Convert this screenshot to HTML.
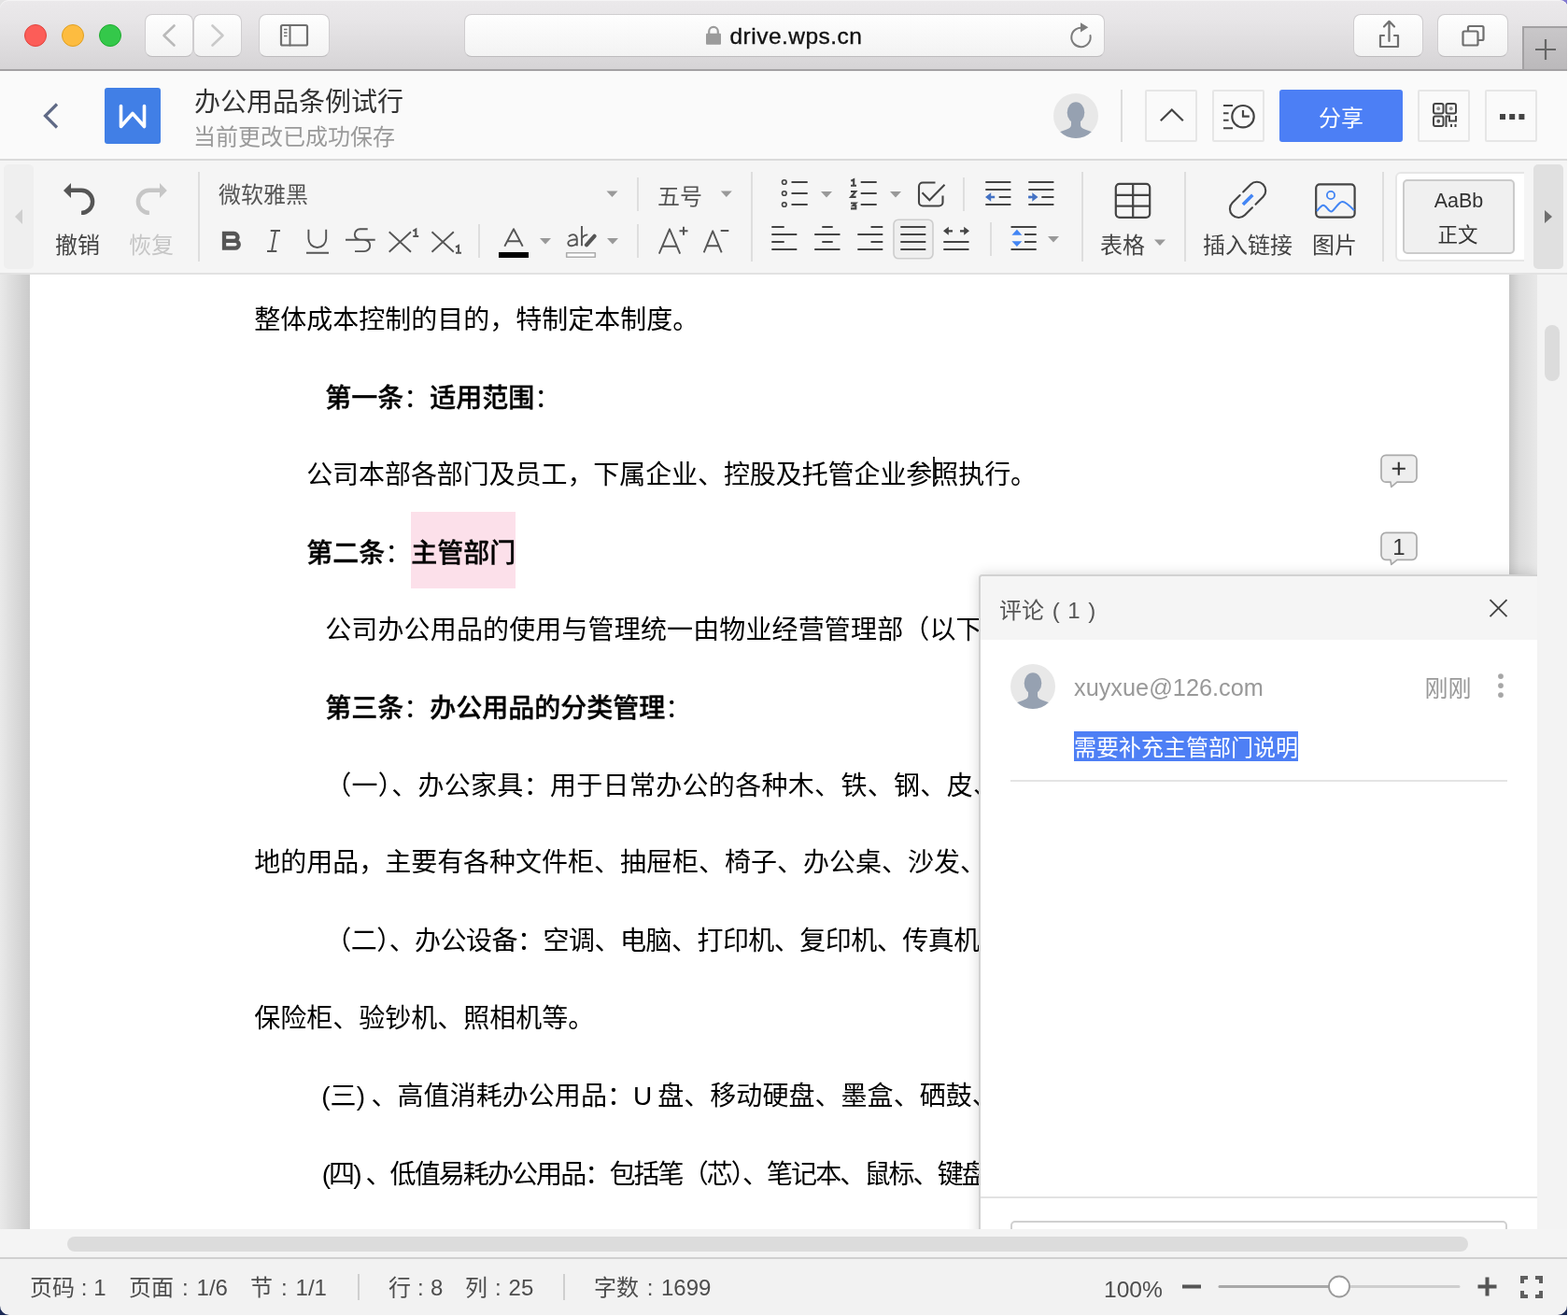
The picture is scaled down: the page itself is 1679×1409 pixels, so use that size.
<!DOCTYPE html>
<html lang="zh-CN">
<head>
<meta charset="utf-8">
<title>办公用品条例试行</title>
<style>
*{box-sizing:border-box;margin:0;padding:0}
html,body{width:1679px;height:1409px;overflow:hidden;background:#fff}
body{position:relative;font-family:"Liberation Sans","Noto Sans CJK SC",sans-serif;color:#444;-webkit-font-smoothing:antialiased}
#root{position:absolute;left:0;top:0;width:1679px;height:1409px;will-change:transform}
.abs{position:absolute}
svg{position:absolute;overflow:visible}
.t{position:absolute;white-space:nowrap;line-height:1;margin-top:.0895em}
/* ---------- browser chrome ---------- */
#chrome{position:absolute;left:0;top:0;width:1679px;height:76px;background:linear-gradient(#ebe9eb 0,#e7e5e7 30%,#d6d4d6 100%);border-bottom:2px solid #a3a1a3;border-radius:9px 9px 0 0;box-shadow:inset 0 1px 0 #f5f4f5}
.cbtn{position:absolute;top:15px;height:46px;border-radius:8px;background:linear-gradient(#fefefe,#f3f3f3);border:1px solid #cfcdcf;border-bottom-color:#bdbbbd}
.dot{position:absolute;top:26px;width:24px;height:24px;border-radius:50%}
/* ---------- app header ---------- */
#hdr{position:absolute;left:0;top:76px;width:1679px;height:96px;background:#fafafa;border-bottom:2px solid #dadada}
.hbtn{position:absolute;top:96px;width:56px;height:56px;border:2px solid #e6e6e6;background:#fafafa;border-radius:2px}
/* ---------- toolbar ---------- */
#tb{position:absolute;left:0;top:172px;width:1679px;height:122px;background:#f5f5f5;border-bottom:2px solid #e2e2e2}
.vsep{position:absolute;width:2px;background:#dedede}
.lbl{position:absolute;white-space:nowrap;line-height:1;font-size:24px;color:#444;margin-top:.0895em}
/* ---------- document ---------- */
#doc{position:absolute;left:0;top:294px;width:1679px;height:1022px;background:#fff;overflow:hidden}
.ln{position:absolute;white-space:nowrap;font-size:28px;line-height:40px;color:#000;font-family:"Liberation Sans","Noto Sans CJK SC",sans-serif;margin:calc(.0895em - .4px) 0 0 -0.8px}
.b{font-weight:500;-webkit-text-stroke:.35px #000}
.b i{font-style:normal;font-weight:400;-webkit-text-stroke:0}
/* ---------- status ---------- */
#hs{position:absolute;left:0;top:1316px;width:1679px;height:30px;background:#f4f4f4}
#st{position:absolute;left:0;top:1346px;width:1679px;height:63px;background:#f2f2f2;border-top:2px solid #d0d0d0}
.st{position:absolute;top:1364px;white-space:nowrap;font-size:24px;line-height:26px;color:#4d4d4d;margin-top:.0895em}
</style>
</head>
<body>
<div id="root">
<!--CHROME-->
<div class="abs" style="left:0;top:0;width:1679px;height:12px;background:linear-gradient(90deg,#e4e3e4 0,#e4e3e4 50%,#8178d0 100%)"></div>
<div id="chrome"></div>
<div class="dot" style="left:26px;background:#fc5d58;border:1px solid #e0443e"></div>
<div class="dot" style="left:66px;background:#fdbc40;border:1px solid #dfa023"></div>
<div class="dot" style="left:106px;background:#34c84a;border:1px solid #1fab2f"></div>
<div class="cbtn" style="left:155px;width:52px"></div>
<div class="cbtn" style="left:207px;width:52px"></div>
<div class="cbtn" style="left:277px;width:76px"></div>
<div class="cbtn" style="left:497px;width:686px"></div>
<div class="cbtn" style="left:1449px;width:75px"></div>
<div class="cbtn" style="left:1539px;width:76px"></div>
<svg style="left:0;top:0" width="1679" height="76" viewBox="0 0 1679 76" fill="none" stroke-linecap="round" stroke-linejoin="round">
  <path d="M186.500 27.500 L175.500 38 L186.500 48.500" stroke="#b9b9b9" stroke-width="2.6"/>
  <path d="M227.500 27.500 L238.500 38 L227.500 48.500" stroke="#c9c9c9" stroke-width="2.6"/>
  <rect x="301" y="27" width="28" height="21.5" rx="1.5" stroke="#6f6f6f" stroke-width="2.2"/>
  <path d="M310.5 27 V48.5" stroke="#6f6f6f" stroke-width="2"/>
  <path d="M304 31.5 H307.5 M304 35 H307.5 M304 38.5 H307.5" stroke="#6f6f6f" stroke-width="1.4" stroke-linecap="butt"/>
  <!-- lock -->
  <rect x="756" y="35.700" width="16" height="12.100" rx="1" fill="#9b9b9b" stroke="none"/>
  <path d="M759.200 36 V33.700 a4.800 4.800 0 0 1 9.600 0 V36" stroke="#9b9b9b" stroke-width="2.200"/>
  <!-- reload -->
  <path d="M1160.5 30.2 A10.2 10.2 0 1 0 1167.5 38" stroke="#7c7c7c" stroke-width="2"/>
  <path d="M1157 24.2 L1165.3 29.2 L1157 34.6 Z" fill="#7c7c7c" stroke="none"/>
  <!-- share -->
  <path d="M1482 38 H1478 V50 H1497 V38 H1493" stroke="#6f6f6f" stroke-width="2.2"/>
  <path d="M1487.5 44 V23.5 M1482 28.5 L1487.500 22.8 L1493 28.5" stroke="#6f6f6f" stroke-width="2.2"/>
  <!-- tabs -->
  <rect x="1566.500" y="33.5" width="16" height="15" rx="1.5" stroke="#6f6f6f" stroke-width="2.2"/>
  <path d="M1572 33 V29.500 a1.5 1.5 0 0 1 1.500 -1.500 H1587 a1.500 1.500 0 0 1 1.500 1.500 V41.500 a1.500 1.500 0 0 1 -1.500 1.500 H1583" stroke="#6f6f6f" stroke-width="2.2"/>
</svg>
<div class="t" id="url" style="margin-top:0;left:781.500px;top:27px;font-family:'Liberation Sans',sans-serif;font-size:24.500px;color:#111;letter-spacing:0.48px;-webkit-text-stroke:.35px #111">drive.wps.cn</div>
<div class="abs" style="left:1630px;top:28px;width:48px;height:46px;background:linear-gradient(#c9c7c9,#bbb9bb);border-left:2px solid #a3a1a3;border-top:2px solid #a3a1a3"></div>
<svg style="left:1630px;top:28px" width="49" height="47" viewBox="0 0 49 47" fill="none"><path d="M14 25 H36 M25 14 V36" stroke="#666" stroke-width="2.200"/></svg>
<!--/CHROME-->
<!--HEADER-->
<div id="hdr"></div>
<svg style="left:0;top:76px" width="1679" height="96" viewBox="0 76 1679 96" fill="none">
  <path d="M61 111.5 L48.500 124 L61 136.500" stroke="#606a86" stroke-width="3.2" stroke-linecap="butt" stroke-linejoin="miter"/>
  <rect x="112" y="94" width="60" height="60" rx="3" fill="#417fe6"/>
  <path d="M129.500 113.500 V135.500 L142 121.500 L154.500 135.500 V113.500" stroke="#fff" stroke-width="3.6" stroke-linecap="round" stroke-linejoin="round"/>
  <!-- avatar -->
  <circle cx="1152" cy="124" r="24" fill="#e8e8e8"/>
  <clipPath id="avc"><circle cx="1152" cy="124" r="24"/></clipPath>
  <g clip-path="url(#avc)" fill="#96a1b1">
    <ellipse cx="1152" cy="120.500" rx="9.300" ry="11.200"/>
    <path d="M1147 128 h10 v5.500 c0 3 2.500 4.300 6 5.500 c5 1.700 9 3.200 10.500 5.500 v6 h-43 v-6 c1.500 -2.300 5.500 -3.800 10.500 -5.500 c3.500 -1.200 6 -2.500 6 -5.500 z"/>
  </g>
  <rect x="1200" y="96" width="2" height="56" fill="#dcdcdc"/>
</svg>
<div class="t" style="left:208px;top:93px;font-size:28px;line-height:28px;color:#333">办公用品条例试行</div>
<div class="t" style="left:207px;top:133px;font-size:24px;line-height:24px;color:#9a9a9a">当前更改已成功保存</div>
<div class="hbtn" style="left:1226px"></div>
<div class="hbtn" style="left:1298px"></div>
<div class="abs" style="left:1370px;top:96px;width:132px;height:56px;background:#4c7ff5;border-radius:3px"></div>
<div class="t" style="left:1412px;top:113px;font-size:24px;line-height:24px;color:#fff">分享</div>
<div class="hbtn" style="left:1518px"></div>
<div class="hbtn" style="left:1590px"></div>
<svg style="left:1220px;top:90px" width="440" height="70" viewBox="1220 90 440 70" fill="none" stroke="#444" stroke-width="2">
  <path d="M1242.800 129.300 L1254.800 117.500 L1266.800 129.300" stroke-width="2.2"/>
  <circle cx="1331" cy="124.700" r="11.700" stroke-width="2.200"/>
  <path d="M1331 118 V124.700 H1337.800" stroke-width="2.200"/>
  <path d="M1310 113 H1320 M1310 121.200 H1315.600 M1310 128.800 H1315.600 M1310 137.200 H1320"/>
  <!-- qr -->
  <rect x="1535" y="111" width="10.500" height="10.500" rx="2"/>
  <rect x="1548.500" y="111" width="10.500" height="10.500" rx="2"/>
  <rect x="1535" y="124.500" width="10.500" height="10.500" rx="2"/>
  <circle cx="1540.250" cy="116.250" r="1.900" fill="#888" stroke="none"/>
  <circle cx="1553.750" cy="116.250" r="1.900" fill="#888" stroke="none"/>
  <circle cx="1540.250" cy="129.750" r="1.900" fill="#555" stroke="none"/>
  <path d="M1548.500 136 V124.500 H1552 V129.500 H1556 M1559 124 V129.500 H1556" />
  <path d="M1554 133 V136 M1558.500 133 V136"/>
  <g fill="#444" stroke="none"><rect x="1606" y="122" width="6" height="6"/><rect x="1616.200" y="122" width="6" height="6"/><rect x="1626.400" y="122" width="6" height="6"/></g>
</svg>
<!--/HEADER-->
<!--TOOLBAR-->
<div id="tb"></div>
<div class="abs" style="left:4px;top:176px;width:32px;height:112px;background:#efefef;border-radius:5px"></div>
<div class="abs" style="left:1642px;top:176px;width:32px;height:112px;background:#e0e0e0;border-radius:5px"></div>
<div class="vsep" style="left:212px;top:184px;height:96px"></div>
<div class="vsep" style="left:682px;top:190px;height:36px"></div>
<div class="vsep" style="left:512px;top:240px;height:36px"></div>
<div class="vsep" style="left:682px;top:240px;height:36px"></div>
<div class="vsep" style="left:804px;top:184px;height:96px"></div>
<div class="vsep" style="left:1031px;top:190px;height:36px"></div>
<div class="vsep" style="left:1060px;top:238px;height:36px"></div>
<div class="vsep" style="left:1158px;top:184px;height:96px"></div>
<div class="vsep" style="left:1268px;top:184px;height:96px"></div>
<div class="vsep" style="left:1480px;top:184px;height:96px"></div>
<div class="lbl" style="left:59px;top:249px">撤销</div>
<div class="lbl" style="left:138px;top:249px;color:#c6c6c6">恢复</div>
<div class="lbl" style="left:234px;top:195px;color:#555">微软雅黑</div>
<div class="lbl" style="left:704px;top:197px;color:#555">五号</div>
<div class="lbl" style="left:1178px;top:249px">表格</div>
<div class="lbl" style="left:1288px;top:249px">插入链接</div>
<div class="lbl" style="left:1405px;top:249px">图片</div>
<!-- style gallery -->
<div class="abs" style="left:1494px;top:184px;width:138px;height:96px;overflow:hidden"><div class="abs" style="left:0;top:0;width:160px;height:96px;background:#fff;border:2px solid #e6e6e6;border-radius:6px"></div></div>
<div class="abs" style="left:1502px;top:192px;width:120px;height:80px;background:#f0f0f0;border:2px solid #cbcbcb;border-radius:5px"></div>
<div class="t" style="left:1502px;width:120px;text-align:center;top:201px;font-size:21.500px;line-height:24px;color:#333">AaBb</div>
<div class="t" style="left:1502px;width:120px;text-align:center;top:238px;font-size:21.500px;line-height:24px;color:#333;margin-left:-1px">正文</div>
<svg style="left:0;top:172px" width="1679" height="122" viewBox="0 172 1679 122" fill="none" stroke="#4a4a4a" stroke-width="2">
  <path d="M24 224 V240 L16 232 Z" fill="#cfcfcf" stroke="none"/>
  <path d="M1654 225 V239 L1662 232 Z" fill="#6e6e6e" stroke="none"/>
  <!-- undo / redo -->
  <g stroke="#555" stroke-width="4.400"><path d="M75.500 203.800 H87.100 A12.050 12.050 0 0 1 87.100 227.900"/><path d="M68 203.900 L76 196.100 V211.900 Z" fill="#555" stroke="none"/></g>
  <g stroke="#c6c6c6" stroke-width="4.400"><path d="M171.500 203.800 H159.900 A12.050 12.050 0 0 0 159.900 227.900"/><path d="M178.800 203.900 L171 196.100 V211.900 Z" fill="#c6c6c6" stroke="none"/></g>
  <!-- carets -->
  <g fill="#999" stroke="none">
    <path d="M649.500 204.500 h12 l-6 6.500 z"/><path d="M771.800 204.500 h12 l-6 6.500 z"/>
    <path d="M578 255 h12 l-6 6.500 z"/><path d="M650 255 h12 l-6 6.500 z"/>
    <path d="M879 205 h12 l-6 6.500 z"/><path d="M953 205 h12 l-6 6.500 z"/>
    <path d="M1122 253 h12 l-6 6.500 z"/><path d="M1236 256.500 h12 l-6 6.500 z"/>
  </g>
  <!-- B I U S X X -->
  <g stroke="#555">
    <path d="M240 250 H250.600 a3.900 3.900 0 0 1 0 7.800 H240 Z M240 257.800 H251.800 a3.950 3.950 0 0 1 0 7.900 H240 Z" stroke-width="4.300" stroke-linejoin="miter"/>
    <path d="M289.700 247 H300 M286 269 H296.300 M295 247 L291 269" stroke-width="1.900"/>
    <path d="M330.400 245.800 V255.600 a9.400 9.400 0 0 0 18.800 0 V245.800 M328 270.800 H352" stroke-width="1.900"/>
    <path d="M370 256.700 H401.700 M393.700 245.300 H385.500 a5.700 5.700 0 0 0 0 11.400 H390 a6.200 6.200 0 0 1 0 12.400 H380" stroke-width="1.900"/>
    <path d="M416.700 248.300 L440 269.700 M440 248.300 L416.700 269.700" stroke-width="1.900"/>
    <path d="M462.500 248.300 L485.800 269.700 M485.800 248.300 L462.500 269.700" stroke-width="1.900"/>
    <path d="M442.300 247.300 L445.300 245.600 V253 M442.300 253 H448.200" stroke-width="2.100"/>
    <path d="M488 264.700 L491 263 V270.800 M488 270.800 H494" stroke-width="2.100"/>
  </g>
  <!-- font color / highlight -->
  <g stroke="#555" stroke-width="1.900" stroke-linejoin="round">
    <path d="M540.300 263.700 L550 245.200 L559.700 263.700 M543.300 258.300 H556.700"/>
    <rect x="534" y="270" width="32" height="6" fill="#000" stroke="none"/>
    <rect x="606.700" y="270.700" width="30.600" height="4.600" fill="#fff" stroke="#adadad" stroke-width="1.600"/>
    <path d="M609 253.300 q4.300 -3.800 7.400 -1 q1.400 1.300 1.400 3.700 V263.300 M617.800 256.300 q-9.800 0.300 -9.500 4.200 q0.300 3 4 2.800 q3.200 -0.200 5.500 -3"/>
    <path d="M623 242 V263.300 M623 255 q2.800 -3.800 6.300 -3.600"/>
    <path d="M636.500 252.800 L628 262.300" stroke-width="4.200" stroke-linecap="round"/>
    <path d="M705.800 271.700 L717 245.300 L728.200 271.700 M709.300 263.700 H724.700"/>
    <path d="M727.500 247.200 H736.500 M732 242.700 V251.700" stroke-width="2"/>
    <path d="M753.700 270.300 L763.200 247.300 L772.700 270.300 M756.700 263.300 H769.700"/>
    <path d="M771.700 247 H780.300" stroke-width="2"/>
  </g>
  <!-- lists -->
  <g stroke="#444">
    <circle cx="839.800" cy="195" r="2.300" stroke-width="1.600"/><circle cx="839.800" cy="207" r="2.300" stroke-width="1.600"/><circle cx="839.800" cy="219" r="2.300" stroke-width="1.600"/>
    <path d="M847.500 195 H864.700 M847.500 207 H864.700 M847.500 219 H864.700"/>
    <path d="M921.700 195 H938.700 M921.700 207 H938.700 M921.700 219 H938.700"/>
    <path d="M911.300 193.800 L914.200 192.300 V198.800 M911 198.800 H917" stroke-width="2.100"/>
    <path d="M911 205 H916.300 L911.200 210.900 H916.600" stroke-width="2.100"/>
    <path d="M911 217.500 H916.300 L913.300 220.300 H916.300 V223.400 H911" stroke-width="2.100"/>
    <path d="M1001.500 195.500 H988 a4 4 0 0 0 -4 4 V216.500 a4 4 0 0 0 4 4 H1005.500 a4 4 0 0 0 4 -4 V209.500" stroke-width="2.100"/>
    <path d="M987.500 206.300 L995.300 214.200 L1011.500 197.700" stroke-width="2.100"/>
    <!-- outdent / indent -->
    <path d="M1055.300 195 H1082.400 M1055.300 203 H1082.400 M1069.700 211 H1082.400 M1055.300 219 H1082.400"/>
    <path d="M1101.300 195 H1128.400 M1101.300 203 H1128.400 M1115.300 211 H1128.400 M1101.300 219 H1128.400"/>
    <!-- align -->
    <path d="M826.300 243 H839.700 M826.300 251 H853.300 M826.300 259 H839.700 M826.300 267 H853.300"/>
    <path d="M880.300 243 H891.700 M872.200 251 H899.500 M880.300 259 H891.700 M872.200 267 H899.500"/>
    <path d="M932.500 243 H945.300 M918.300 251 H945.300 M932.500 259 H945.300 M918.300 267 H945.300"/>
    <rect x="957" y="235.200" width="42" height="41.600" rx="5" fill="#efefef" stroke="#cdcdcd" stroke-width="1.600"/>
    <path d="M964.300 243 H991.300 M964.300 251 H991.300 M964.300 259 H991.300 M964.300 267 H991.300"/>
    <path d="M1010.300 259 H1037.500 M1010.300 267 H1037.500"/>
    <path d="M1013 247.300 H1020 M1028 247.300 H1035" stroke-width="2.200"/>
    <path d="M1010 247.300 L1015.800 242.800 V251.800 Z M1038 247.300 L1032.200 242.800 V251.800 Z" fill="#444" stroke="none"/>
    <!-- line spacing -->
    <path d="M1082.500 243 H1109.700 M1097 251 H1109.700 M1097 259 H1109.700 M1082.500 267 H1109.700"/>
    <!-- table -->
    <rect x="1194.800" y="196.800" width="36.400" height="36" rx="4" stroke-width="2.200"/>
    <path d="M1194.800 208.800 H1231.200 M1194.800 220.600 H1231.200 M1213.200 196.800 V232.800" stroke-width="2.200"/>
    <!-- link -->
    <g transform="translate(1336.100 213.900) rotate(-45)" stroke-width="2.100" stroke-linecap="round">
      <path d="M-2.500 -9.400 H-13.800 A9.400 9.400 0 0 0 -13.800 9.400 H-2.500 M2.500 -9.400 H13.800 A9.400 9.400 0 0 1 13.800 9.400 H2.500"/>
      <path d="M-7.300 0 H7.300" stroke="#4285f4" stroke-width="3.600" stroke-linecap="butt"/>
    </g>
    <!-- picture -->
    <rect x="1409.200" y="197.300" width="41.400" height="35.300" rx="4" stroke-width="2.200"/>
    <circle cx="1425" cy="209" r="4.100" stroke="#4285f4" stroke-width="1.800"/>
    <path d="M1410 226 C1413 222.500 1415 219.800 1417 219.800 C1420 219.800 1422.500 226.500 1425.500 226.500 C1428.500 226.500 1433 216 1437.300 216 C1441 216 1446 221 1450 225.300" stroke="#4285f4" stroke-width="2"/>
  </g>
  <g fill="#4472c4" stroke="#4472c4" stroke-width="2.400">
    <path d="M1058 211 H1065.200 M1104 211 H1101.300"/>
    <path d="M1101.300 211 H1107"/>
    <path d="M1055 211 L1061.200 206.300 V215.700 Z M1111.500 211 L1105.300 206.300 V215.700 Z" stroke="none"/>
  </g>
  <g fill="#4285f4" stroke="none">
    <path d="M1088.900 245.800 L1094.400 251.700 H1083.400 Z M1088.900 264 L1094.400 258.200 H1083.400 Z"/>
  </g>
</svg>
<!--/TOOLBAR-->
<!--DOC-->
<div id="doc">
  <div class="abs" style="left:0;top:0;width:32px;height:1022px;background:linear-gradient(90deg,#e9e9e9,#cbcbcb)"></div>
  <div class="abs" style="left:1616px;top:0;width:30px;height:1022px;background:linear-gradient(90deg,#c6c6c6,#dcdcdc 35%,#e8e8e8)"></div>
  <div class="abs" style="left:440px;top:254px;width:112px;height:82px;background:#fce0ea"></div>
  <div class="ln" style="left:273px;top:27px">整体成本控制的目的，特制定本制度。</div>
  <div class="ln b" style="left:349px;top:111px">第一条<i>：</i>适用范围<i>：</i></div>
  <div class="ln" style="left:329px;top:193px;letter-spacing:-0.08px">公司本部各部门及员工，下属企业、控股及托管企业参照执行。</div>
  <div class="ln b" style="left:329px;top:277px">第二条<i>：</i>主管部门</div>
  <div class="ln" style="left:349px;top:359px;letter-spacing:0.14px">公司办公用品的使用与管理统一由物业经营管理部（以下简称物业部）</div>
  <div class="ln b" style="left:349px;top:443px">第三条<i>：</i>办公用品的分类管理<i>：</i></div>
  <div class="ln" style="left:349px;top:526px;letter-spacing:0.31px">（一）、办公家具：用于日常办公的各种木、铁、钢、皮、塑料等</div>
  <div class="ln" style="left:273px;top:608px;letter-spacing:-0.01px">地的用品，主要有各种文件柜、抽屉柜、椅子、办公桌、沙发、茶几</div>
  <div class="ln" style="left:349px;top:692px;letter-spacing:-0.52px">（二）、办公设备：空调、电脑、打印机、复印机、传真机、</div>
  <div class="ln" style="left:273px;top:775px">保险柜、验钞机、照相机等。</div>
  <div class="ln" style="left:345px;top:858px;letter-spacing:0.05px">(三)<span style="letter-spacing:-1.3px"> </span>、高值消耗办公用品：<span style="letter-spacing:-.9px">U </span>盘、移动硬盘、墨盒、硒鼓、</div>
  <div class="ln" style="left:345.5px;top:942px;letter-spacing:-1.91px">(四) 、低值易耗办公用品：包括笔（芯）、笔记本、鼠标、键盘、</div>
  <div class="abs" style="left:999px;top:195px;width:2px;height:32px;background:#222"></div>
<!--PANEL-->
  <!-- comment bubbles (page y - 294) -->
  <svg style="left:1470px;top:185px" width="60" height="130" viewBox="1470 479 60 130" fill="#eee" stroke="#aaa" stroke-width="1.700" stroke-linejoin="round">
    <path d="M1484 487.300 H1512 a5 5 0 0 1 5 5 V511.200 a5 5 0 0 1 -5 5 H1496 L1489.800 521.300 L1489 516.200 H1484 a5 5 0 0 1 -5 -5 V492.300 a5 5 0 0 1 5 -5 Z"/>
    <path d="M1484 570.400 H1512 a5 5 0 0 1 5 5 V594.300 a5 5 0 0 1 -5 5 H1496 L1489.800 604.400 L1489 599.300 H1484 a5 5 0 0 1 -5 -5 V575.400 a5 5 0 0 1 5 -5 Z"/>
    <path d="M1490.800 501.700 H1504.800 M1497.800 494.700 V508.700" stroke="#333" stroke-width="2.100" fill="none"/>
  </svg>
  <div class="t" style="left:1479px;width:38px;text-align:center;top:277px;font-size:24px;line-height:26px;color:#333">1</div>
  <!-- comment panel -->
  <div class="abs" id="cp" style="left:1048px;top:321px;width:598px;height:720px;background:#fff;border:2px solid #d2d2d2;border-right:none;border-radius:4px 0 0 0;box-shadow:0 0 14px rgba(0,0,0,.16)"></div>
  <div class="abs" style="left:1050px;top:323px;width:596px;height:68px;background:#f5f5f5;border-radius:2px 0 0 0"></div>
  <div class="t" style="left:1070px;top:346px;font-size:24px;line-height:24px;color:#555;word-spacing:2px">评论 ( 1 )</div>
  <svg style="left:1590px;top:343px" width="30" height="30" viewBox="1590 637 30 30" fill="none" stroke="#444" stroke-width="1.900"><path d="M1595.500 642.200 L1613.500 660.200 M1613.500 642.200 L1595.500 660.200"/></svg>
  <svg style="left:1080px;top:415px" width="52" height="52" viewBox="1126 98 52 52">
    <circle cx="1152" cy="124" r="24" fill="#e8e8e8"/>
    <clipPath id="avc2"><circle cx="1152" cy="124" r="24"/></clipPath>
    <g clip-path="url(#avc2)" fill="#96a1b1">
      <ellipse cx="1152" cy="120.500" rx="9.300" ry="11.200"/>
      <path d="M1147 128 h10 v5.500 c0 3 2.500 4.300 6 5.500 c5 1.700 9 3.200 10.500 5.500 v6 h-43 v-6 c1.500 -2.300 5.500 -3.800 10.500 -5.500 c3.500 -1.200 6 -2.500 6 -5.500 z"/>
    </g>
  </svg>
  <div class="t" style="left:1150px;top:427px;font-size:25.300px;line-height:26px;color:#999">xuyxue@126.com</div>
  <div class="t" style="left:1525.500px;top:429px;font-size:25px;line-height:25px;color:#999">刚刚</div>
  <svg style="left:1600px;top:425px" width="14" height="30" viewBox="1600 719 14 30" fill="#a6a6a6"><circle cx="1607" cy="724.100" r="2.900"/><circle cx="1607" cy="734.100" r="2.900"/><circle cx="1607" cy="744.100" r="2.900"/></svg>
  <div class="abs" style="left:1150px;top:489px;height:32px;width:240px;background:#4e7ff5"></div>
  <div class="t" style="left:1150px;top:493px;font-size:24px;line-height:24px;color:#fff">需要补充主管部门说明</div>
  <div class="abs" style="left:1082px;top:541px;width:532px;height:2px;background:#e4e4e4"></div>
  <div class="abs" style="left:1050px;top:987px;width:596px;height:2px;background:#e2e2e2"></div>
  <div class="abs" style="left:1082px;top:1013px;width:532px;height:60px;border:2px solid #d0d0d0;border-radius:5px;background:#fff"></div>
<!--/PANEL-->
  <div class="abs" style="left:1646px;top:0;width:33px;height:1022px;background:#f3f3f3"></div>
  <div class="abs" style="left:1654px;top:54px;width:16px;height:60px;border-radius:8px;background:#dcdcdc"></div>

</div>
<!--/DOC-->
<!--STATUS-->
<div id="hs"></div>
<div class="abs" style="left:72px;top:1324px;width:1500px;height:16px;border-radius:8px;background:#dcdcdc"></div>
<div id="st"></div>
<div class="st" style="left:32px;word-spacing:.15px">页码 : 1</div>
<div class="st" style="left:138px;word-spacing:2.3px">页面 : 1/6</div>
<div class="st" style="left:268px;word-spacing:2.3px">节 : 1/1</div>
<div class="abs" style="left:383px;top:1364px;width:2px;height:28px;background:#cfcfcf"></div>
<div class="st" style="left:416px;word-spacing:.45px">行 : 8</div>
<div class="st" style="left:498px;word-spacing:1.3px">列 : 25</div>
<div class="abs" style="left:603px;top:1364px;width:2px;height:28px;background:#cfcfcf"></div>
<div class="st" style="left:636px;word-spacing:2px">字数 : 1699</div>
<div class="st" style="left:1182px;top:1365.500px;font-size:24.600px">100%</div>
<svg style="left:1260px;top:1360px" width="410" height="40" viewBox="1260 1360 410 40" fill="none">
  <path d="M1266 1377.500 H1286" stroke="#555" stroke-width="4"/>
  <path d="M1306 1377.500 H1434" stroke="#a8a8a8" stroke-width="3" stroke-linecap="round"/>
  <path d="M1434 1377.500 H1562" stroke="#cecece" stroke-width="3" stroke-linecap="round"/>
  <circle cx="1434" cy="1377.500" r="11" fill="#fff" stroke="#999" stroke-width="1.800"/>
  <path d="M1582.500 1377.500 H1602.500 M1592.500 1367.500 V1387.500" stroke="#555" stroke-width="4"/>
  <path d="M1628 1374 V1366 H1636 V1370 H1632 V1374 Z M1644 1366 H1652 V1374 H1648 V1370 H1644 Z M1628 1382 H1632 V1386 H1636 V1390 H1628 Z M1652 1382 V1390 H1644 V1386 H1648 V1382 Z" fill="#606060"/>
</svg>
<!-- window corners -->
<svg style="left:0;top:1396px" width="12" height="12" viewBox="0 0 12 12"><path d="M0 12 V2 A10 10 0 0 0 10 12 Z" fill="#1c2a55"/></svg>
<svg style="left:1666px;top:1396px" width="12" height="12" viewBox="0 0 12 12"><path d="M12 12 V2 A10 10 0 0 1 2 12 Z" fill="#1c2a55"/></svg>
<div class="abs" style="left:1678px;top:0;width:1px;height:1409px;background:#fff"></div>
<div class="abs" style="left:0;top:1408px;width:1679px;height:1px;background:#fff"></div>
<!--/STATUS-->
</div>
</body>
</html>
